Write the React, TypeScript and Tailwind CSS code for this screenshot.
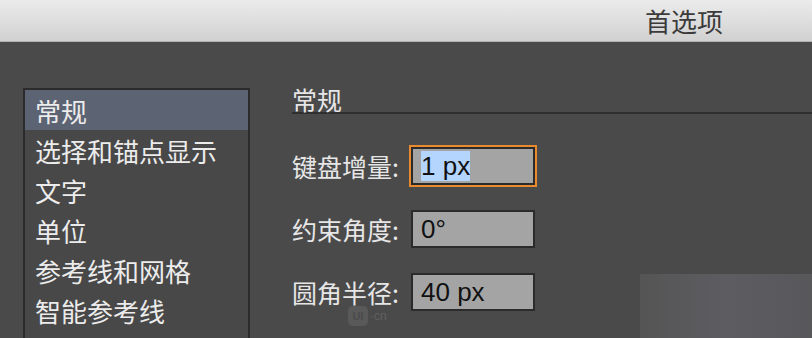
import React from 'react';

const CJK = '"Noto Sans CJK SC", "Noto Sans", sans-serif';
const NUM = '"Liberation Sans", Arial, sans-serif';

const categories = ['常规', '选择和锚点显示', '文字', '单位', '参考线和网格', '智能参考线'];

interface FieldProps {
    label: string;
    value: string;
    focused?: boolean;
}

const Field: React.FC<FieldProps> = ({ label, value, focused }) => (
    <div className="flex items-center h-[42px]">
        <div className="w-[119px] text-[25px] leading-[26px] text-[#e6e6e6] whitespace-nowrap" style={{ fontFamily: CJK }}>
            {label}
        </div>
        <div
            className={`w-[124px] h-[38px] border-2 border-[#2b2b2b] bg-[#a4a4a4] flex items-center pl-[8px] ${
                focused ? 'ring-2 ring-[#ea8a2f]' : ''
            }`}
        >
            <span
                className={`text-[26px] leading-[30px] text-[#111] ${focused ? 'bg-[#b4d5fe]' : ''}`}
                style={{ fontFamily: NUM }}
            >
                {value}
            </span>
        </div>
    </div>
);

export default function App() {
    return (
        <div className="w-[812px] h-[338px] overflow-hidden bg-[#4a4a4a] flex flex-col">
            {/* 标题栏 */}
            <div className="h-[42px] shrink-0 bg-gradient-to-b from-[#ebebeb] to-[#d1d1d1] border-b border-[#b3b3b3] flex items-center justify-end pr-[89px]">
                <span className="text-[26px] leading-[30px] text-[#3b3b3b]" style={{ fontFamily: CJK }}>
                    首选项
                </span>
            </div>

            <div className="relative flex flex-1 pl-[23px] pt-[46px]">
                {/* 左侧分类列表 */}
                <div className="w-[227px] h-[270px] shrink-0 border-2 border-[#2b2b2b] bg-[#484848]">
                    {categories.map((c, i) => (
                        <div
                            key={c}
                            className={`h-[40px] flex items-center pl-[10px] text-[26px] text-[#ececec] ${
                                i === 0 ? 'bg-[#5c6373]' : ''
                            }`}
                            style={{ fontFamily: CJK }}
                        >
                            {c}
                        </div>
                    ))}
                </div>

                {/* 右侧设置 */}
                <div className="flex-1 ml-[42px] -mt-[46px] flex flex-col">
                    <div
                        className="mt-[44px] h-[28px] border-b-2 border-[#2f2f2f] text-[25px] leading-[26px] text-[#e6e6e6]"
                        style={{ fontFamily: CJK }}
                    >
                        常规
                    </div>
                    <div className="mt-[31px] flex flex-col gap-[21px]">
                        <Field label="键盘增量:" value="1 px" focused />
                        <Field label="约束角度:" value="0°" />
                        <div className="flex items-start">
                            <Field label="圆角半径:" value="40 px" />
                            <div className="ml-auto mt-[3px] w-[172px] h-[70px] bg-gradient-to-r from-[#555555] via-[#5d5c61] to-[#58585b]" />
                        </div>
                    </div>
                </div>

                {/* 水印 */}
                <div className="absolute left-[348px] top-[264px] flex items-center gap-[2px] text-[#606060]">
                    <span className="w-[20px] h-[20px] rounded-[5px] bg-[#595959] text-[11px] leading-[20px] font-bold text-[#4a4a4a] flex items-center justify-center" style={{ fontFamily: NUM }}>
                        UI
                    </span>
                    <span className="text-[12px] leading-[20px]" style={{ fontFamily: NUM }}>·cn</span>
                </div>
            </div>
        </div>
    );
}
